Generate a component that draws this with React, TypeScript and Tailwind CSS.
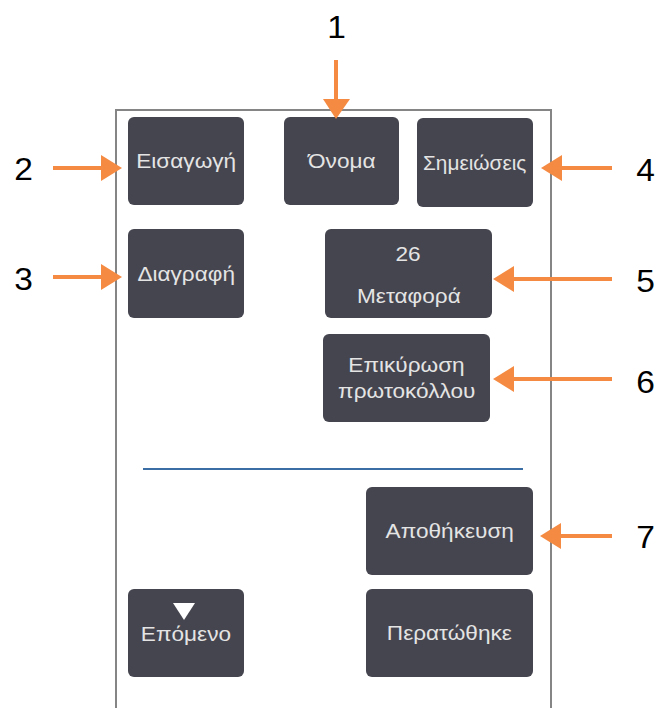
import React from "react";

const btn =
  "flex flex-col items-center justify-center rounded-md bg-[#45454f] text-[#e4e4e4] text-[20px] leading-[26px] shrink-0";

function T({ children, narrow }: { children: React.ReactNode; narrow?: boolean }) {
  return (
    <span className={`inline-block whitespace-nowrap ${narrow ? "scale-x-[1.04]" : "scale-x-[1.13]"}`}>
      {children}
    </span>
  );
}

function Arrows() {
  const c = "#f58b43";
  const right = (y: number, x1: number, tip: number) => (
    <g key={`r${y}`}>
      <rect x={x1} y={y - 2} width={tip - 20 - x1} height={4} fill={c} />
      <polygon points={`${tip - 21},${y - 13} ${tip},${y} ${tip - 21},${y + 13}`} fill={c} />
    </g>
  );
  const left = (y: number, tip: number, x2: number) => (
    <g key={`l${y}`}>
      <rect x={tip + 20} y={y - 2} width={x2 - tip - 20} height={4} fill={c} />
      <polygon points={`${tip + 21},${y - 13} ${tip},${y} ${tip + 21},${y + 13}`} fill={c} />
    </g>
  );
  return (
    <svg className="absolute left-0 top-0 pointer-events-none" width={658} height={708}>
      <rect x={334} y={60} width={4} height={40} fill={c} />
      <polygon points="323,99 350,99 336,119" fill={c} />
      {right(168, 53, 122)}
      {right(277, 53, 122)}
      {left(168, 541, 612)}
      {left(279, 493, 612)}
      {left(379, 493, 612)}
      {left(536, 540, 612)}
    </svg>
  );
}

function Num({ n, cls }: { n: string; cls: string }) {
  return (
    <div className={`absolute text-[31px] leading-none text-black ${cls}`}>
      <span className="inline-block scale-x-[1.08]">{n}</span>
    </div>
  );
}

export default function App() {
  return (
    <div
      className="relative w-[658px] h-[708px] bg-white overflow-hidden"
      style={{ fontFamily: '"Liberation Sans", Arial, sans-serif' }}
    >
      <div className="ml-[115px] mt-[109px] w-[437px] h-[599px] border-2 border-b-0 border-[#858585] flex flex-col">
        <div className="flex items-start mt-[6px]">
          <div className={`${btn} ml-[11px] w-[116px] h-[88px]`}><T>Εισαγωγή</T></div>
          <div className={`${btn} ml-[40px] w-[115px] h-[88px]`}><T>Όνομα</T></div>
          <div className={`${btn} ml-[18px] mt-[1px] w-[116px] h-[89px]`}><T narrow>Σημειώσεις</T></div>
        </div>
        <div className="flex items-start mt-[22px]">
          <div className={`${btn} ml-[11px] w-[116px] h-[89px]`}><T>Διαγραφή</T></div>
          <div className={`${btn} ml-[81px] w-[167px] h-[89px] !justify-start pt-[12px] gap-[16px]`}>
            <T>26</T>
            <T>Μεταφορά</T>
          </div>
        </div>
        <div className="flex mt-[16px]">
          <div className={`${btn} ml-[206px] w-[167px] h-[88px] text-center`}>
            <T>Επικύρωση</T>
            <T>πρωτοκόλλου</T>
          </div>
        </div>
        <div className="ml-[26px] mt-[46px] w-[380px] h-[2px] bg-[#3a6ea5]" />
        <div className="flex mt-[17px]">
          <div className={`${btn} ml-[249px] w-[167px] h-[88px]`}><T>Αποθήκευση</T></div>
        </div>
        <div className="flex mt-[14px]">
          <div className={`${btn} ml-[11px] w-[116px] h-[88px] relative`}>
            <span className="absolute left-[45px] top-[14px] w-0 h-0 border-l-[11px] border-r-[11px] border-t-[17px] border-l-transparent border-r-transparent border-t-white" />
            <span className="mt-[2px]"><T>Επόμενο</T></span>
          </div>
          <div className={`${btn} ml-[122px] w-[167px] h-[88px]`}><T>Περατώθηκε</T></div>
        </div>
      </div>
      <Arrows />
      <Num n="1" cls="left-[328px] top-[12px]" />
      <Num n="2" cls="left-[15px] top-[154px]" />
      <Num n="3" cls="left-[15px] top-[264px]" />
      <Num n="4" cls="left-[637px] top-[155px]" />
      <Num n="5" cls="left-[637px] top-[266px]" />
      <Num n="6" cls="left-[637px] top-[367px]" />
      <Num n="7" cls="left-[637px] top-[522px]" />
    </div>
  );
}
